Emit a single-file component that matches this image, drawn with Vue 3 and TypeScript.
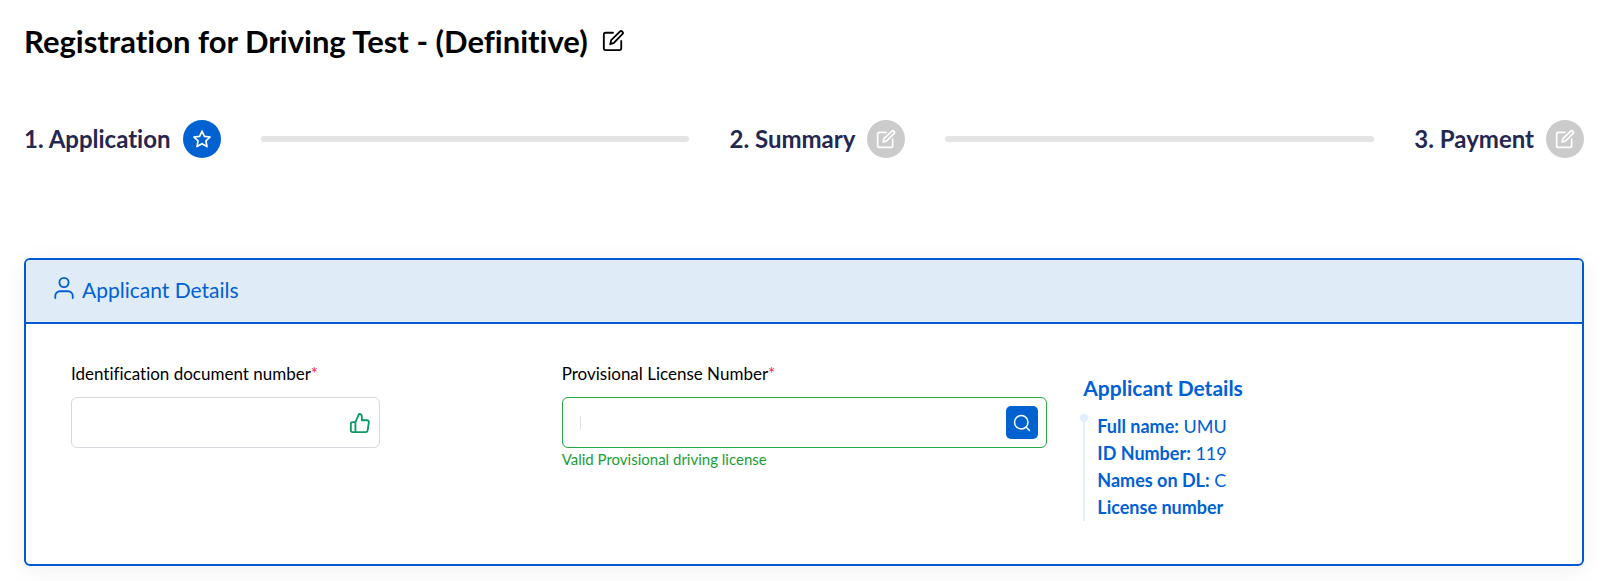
<script setup lang="ts">
import { ref } from 'vue'

interface Step {
  label: string
  active: boolean
}

interface Detail {
  term: string
  value: string
}

const steps: Step[] = [
  { label: '1. Application', active: true },
  { label: '2. Summary', active: false },
  { label: '3. Payment', active: false },
]

const details: Detail[] = [
  { term: 'Full name:', value: 'UMU' },
  { term: 'ID Number:', value: '119' },
  { term: 'Names on DL:', value: 'C' },
  { term: 'License number', value: '' },
]

const documentNumber = ref('')
const licenseNumber = ref('')
</script>

<template>
  <main class="page">
    <header class="title">
      <h1>Registration for Driving Test - (Definitive)</h1>
      <svg class="title-icon" viewBox="0 0 24 24" aria-hidden="true">
        <path d="M12 3H4a2 2 0 0 0-2 2v15a2 2 0 0 0 2 2h15a2 2 0 0 0 2-2v-8" />
        <path d="M9 15.500l1-4.500L19.500 1.800a1.900 1.900 0 0 1 2.700 2.700L13 14z" />
      </svg>
    </header>

    <ol class="stepper">
      <template v-for="(step, index) in steps" :key="step.label">
        <li v-if="index > 0" class="line" aria-hidden="true"></li>
        <li class="step">
          <span class="step-label">{{ step.label }}</span>
          <span class="badge" :class="{ active: step.active }">
            <svg v-if="step.active" viewBox="0 0 24 24" aria-hidden="true">
              <path d="M12 2.500l2.900 6.300 6.800.8-5 4.700 1.300 6.800-6-3.400-6 3.400 1.300-6.800-5-4.700 6.800-.8z" />
            </svg>
            <svg v-else viewBox="0 0 24 24" aria-hidden="true">
              <path d="M12 4H4a2 2 0 0 0-2 2v14a2 2 0 0 0 2 2h14a2 2 0 0 0 2-2v-8" />
              <path d="M8.500 15.500l1-4L19 2.500a2 2 0 0 1 2.800 2.800L12.500 14.500z" />
            </svg>
          </span>
        </li>
      </template>
    </ol>

    <section class="card">
      <h2 class="card-header">
        <svg viewBox="0 0 24 24" aria-hidden="true">
          <circle cx="12" cy="6" r="5" />
          <path d="M2.500 23v-2.500a5 5 0 0 1 5-5h9a5 5 0 0 1 5 5V23" />
        </svg>
        <span>Applicant Details</span>
      </h2>
      <div class="card-body">
        <div class="field narrow">
          <label for="document-number">Identification document number<span class="required">*</span></label>
          <div class="control">
            <input id="document-number" v-model="documentNumber" type="text" />
            <svg class="thumb" viewBox="0 0 24 24" aria-hidden="true">
              <path d="M14 9V5a3 3 0 0 0-3-3l-4 9v11h11.280a2 2 0 0 0 2-1.700l1.380-9a2 2 0 0 0-2-2.300zM7 22H4a2 2 0 0 1-2-2v-7a2 2 0 0 1 2-2h3" />
            </svg>
          </div>
        </div>

        <div class="field wide">
          <label for="license-number">Provisional License Number<span class="required">*</span></label>
          <div class="control valid">
            <input id="license-number" v-model="licenseNumber" type="text" aria-describedby="license-hint" />
            <button type="button" aria-label="Search">
              <svg viewBox="0 0 24 24" aria-hidden="true">
                <circle cx="11" cy="11" r="9" />
                <path d="M17.500 17.500L22 22" />
              </svg>
            </button>
          </div>
          <p id="license-hint" class="hint">Valid Provisional driving license</p>
        </div>

        <aside class="summary">
          <h3>Applicant Details</h3>
          <ul>
            <li v-for="item in details" :key="item.term">
              <strong>{{ item.term }}</strong> {{ item.value }}
            </li>
          </ul>
        </aside>
      </div>
    </section>
  </main>
</template>

<style>
body {
  margin: 0;
  background: #fff;
}
</style>

<style scoped>
* {
  box-sizing: border-box;
}

.page {
  padding: 19px 16px 16px 24px;
  font-family: Lato, "Noto Sans", sans-serif;
  font-variant-ligatures: none;
  color: #000;
}

h1,
h2,
h3,
p,
ol,
ul {
  margin: 0;
  padding: 0;
  font-weight: 400;
  list-style: none;
}

svg {
  fill: none;
  stroke: currentColor;
  stroke-width: 2;
  stroke-linecap: round;
  stroke-linejoin: round;
  flex: none;
}

.title {
  display: flex;
  align-items: center;
  gap: 14px;
  height: 44px;
}

.title h1 {
  font-size: 31px;
  font-weight: 700;
}

.title-icon {
  width: 22px;
  height: 22px;
}

.stepper {
  display: flex;
  align-items: center;
  gap: 40px;
  margin-top: 57px;
}

.step {
  display: flex;
  align-items: center;
  gap: 12px;
}

.step-label {
  font-size: 24px;
  line-height: 30px;
  font-weight: 700;
  color: #242850;
  white-space: nowrap;
}

.line {
  flex: 1;
  height: 6px;
  border-radius: 3px;
  background: #e4e4e4;
}

.badge {
  display: flex;
  align-items: center;
  justify-content: center;
  width: 38px;
  height: 38px;
  border-radius: 50%;
  background: #cbcbcb;
  color: #fff;
}

.badge svg {
  width: 20px;
  height: 20px;
}

.badge.active {
  background: #0062d1;
}

.card {
  margin-top: 100px;
  border: 2px solid #0059d0;
  border-radius: 6px;
  box-shadow: 0 4px 24px rgba(0, 0, 0, 0.06);
}

.card-header {
  display: flex;
  align-items: flex-start;
  gap: 7px;
  height: 64px;
  padding: 17px 27px 0;
  border-bottom: 2px solid #0059d0;
  border-radius: 4px 4px 0 0;
  background: #dfecf8;
  color: #0060d6;
  font-size: 21px;
  line-height: 25px;
}

.card-header svg {
  width: 22px;
  height: 22px;
}

.card-body {
  display: grid;
  grid-template-columns: 491fr 522fr 454fr;
  padding: 38px 45px 43px;
}

.field label {
  display: block;
  font-size: 17px;
  line-height: 24px;
}

.required {
  color: #ff1f48;
}

.control {
  position: relative;
  display: flex;
  align-items: center;
  height: 51px;
  margin-top: 11px;
  padding-right: 8px;
  border: 1px solid #d3d8df;
  border-radius: 6px;
  background: #fff;
}

.narrow .control {
  width: 63%;
}

.wide .control {
  width: 93%;
}

.control.valid {
  border-color: #28a745;
}

.control.valid::before {
  content: "";
  width: 1px;
  height: 14px;
  margin-left: 17px;
  background: #dfdfdf;
}

.control input {
  flex: 1;
  min-width: 0;
  height: 100%;
  padding: 0 16px;
  border: 0;
  border-radius: 6px;
  outline: 0;
  background: transparent;
  font: inherit;
  font-size: 17px;
}

.thumb {
  width: 22px;
  height: 22px;
  color: #0a9b62;
}

button {
  display: flex;
  align-items: center;
  justify-content: center;
  width: 32px;
  height: 33px;
  padding: 0;
  border: 0;
  border-radius: 5px;
  background: #0062d1;
  color: #fff;
}

button svg {
  width: 18px;
  height: 18px;
}

.hint {
  color: #1a9e36;
  font-size: 15px;
  line-height: 22px;
}

.summary {
  padding-top: 13px;
  color: #0060d6;
}

.summary h3 {
  font-size: 21px;
  line-height: 26px;
  font-weight: 700;
}

.summary ul {
  position: relative;
  margin-top: 12px;
  padding-left: 14px;
  font-size: 18px;
  line-height: 27px;
}

.summary ul::before {
  content: "";
  position: absolute;
  top: 4px;
  bottom: 0;
  left: 0;
  width: 2px;
  background: #e1eefb;
}

.summary ul::after {
  content: "";
  position: absolute;
  top: 1px;
  left: -3px;
  width: 8px;
  height: 8px;
  border-radius: 50%;
  background: #e1eefb;
}

.summary li {
  white-space: nowrap;
}
</style>
